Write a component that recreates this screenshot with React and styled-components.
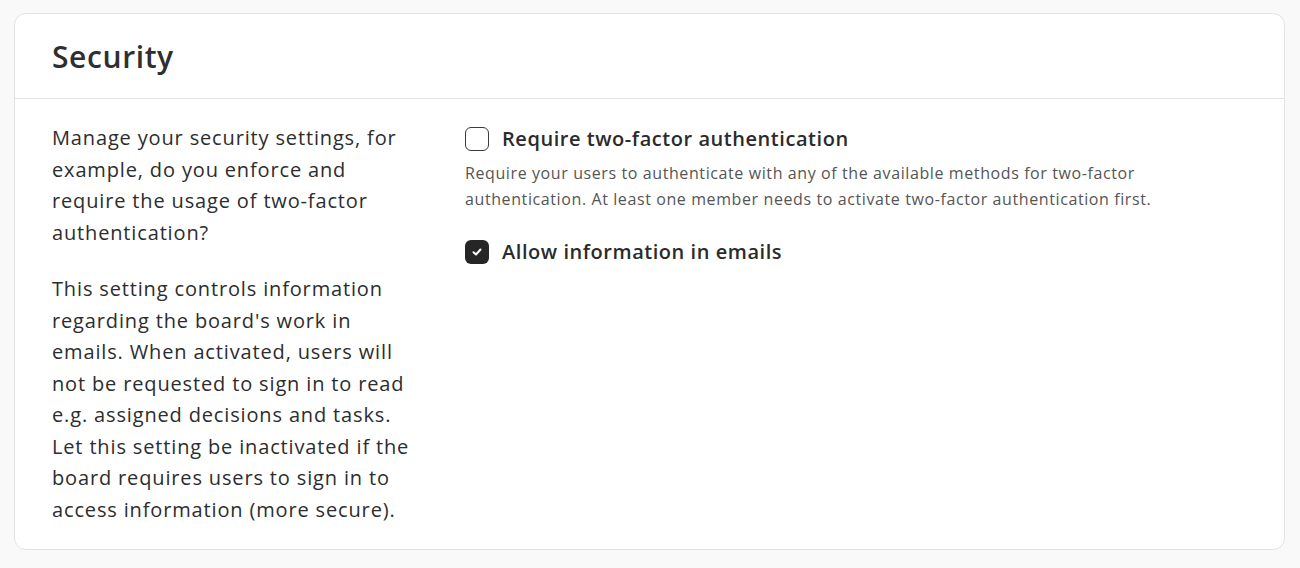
import React from 'react'
import styled, { createGlobalStyle } from 'styled-components'

const GlobalStyle = createGlobalStyle`
	body {
		margin: 0;
		background: #f9f9f9;
		font-family: 'Open Sans', 'Noto Sans', sans-serif;
		color: #2b2b2b;
	}
`

const Page = styled.div`
	padding: 13px 15px 18px 14px;
`

const Card = styled.section`
	background: #fff;
	border: 1px solid #e3e3e3;
	border-radius: 12px;
`

const Header = styled.header`
	height: 84px;
	display: flex;
	align-items: center;
	padding: 0 37px;
	border-bottom: 1px solid #e3e3e3;
	h2 {
		margin: 0;
		font-size: 30px;
		font-weight: 600;
		letter-spacing: 0.6px;
		color: #2f2f2f;
	}
`

const Body = styled.div`
	display: grid;
	grid-template-columns: 372px 1fr;
	column-gap: 41px;
	padding: 23px 37px 24px 37px;
`

const Description = styled.div`
	p {
		margin: 0 0 25px;
		font-size: 20px;
		line-height: 31.5px;
		letter-spacing: 0.85px;
		color: #2d2d2d;
	}
	p:last-child {
		margin-bottom: 0;
	}
`

const Options = styled.div`
	display: flex;
	flex-direction: column;
	gap: 28px;
	padding-top: 5px;
`

const Option = styled.div`
	display: flex;
	flex-direction: column;
`

const Label = styled.label`
	display: flex;
	align-items: center;
	gap: 13px;
	font-size: 20px;
	font-weight: 600;
	line-height: 24px;
	letter-spacing: 0.55px;
	color: #2b2b2b;
`

const Box = styled.span`
	width: 24px;
	height: 24px;
	box-sizing: border-box;
	border-radius: 6px;
	border: ${(p) => (p.checked ? 'none' : '1.5px solid #3a3a3a')};
	background: ${(p) => (p.checked ? '#262626' : '#fff')};
	display: flex;
	align-items: center;
	justify-content: center;
	flex-shrink: 0;
`

const Help = styled.p`
	margin: 9px 0 0;
	font-size: 16px;
	line-height: 26px;
	letter-spacing: 0.6px;
	color: #555;
	max-width: 720px;
`

const Checkbox = ({ checked, children }) => (
	<Label>
		<Box checked={checked}>
			{checked && (
				<svg width='12' height='12' viewBox='0 0 12 12'>
					<path d='M2.5 6.2 L5 8.5 L9.5 3.5' fill='none' stroke='#fff' strokeWidth='2' strokeLinecap='round' strokeLinejoin='round' />
				</svg>
			)}
		</Box>
		{children}
	</Label>
)

const App = () => {
	return (
		<Page>
			<GlobalStyle />
			<Card>
				<Header>
					<h2>Security</h2>
				</Header>
				<Body>
					<Description>
						<p>
							Manage your security settings, for example, do you enforce and require the usage of
							two-factor authentication?
						</p>
						<p>
							This setting controls information regarding the board's work in emails. When
							activated, users will not be requested to sign in to read e.g. assigned decisions and
							tasks. Let this setting be inactivated if the board requires users to sign in to
							access information (more secure).
						</p>
					</Description>
					<Options>
						<Option>
							<Checkbox>Require two-factor authentication</Checkbox>
							<Help>
								Require your users to authenticate with any of the available methods for two-factor
								authentication. At least one member needs to activate two-factor authentication first.
							</Help>
						</Option>
						<Option>
							<Checkbox checked>Allow information in emails</Checkbox>
						</Option>
					</Options>
				</Body>
			</Card>
		</Page>
	)
}

export default App
